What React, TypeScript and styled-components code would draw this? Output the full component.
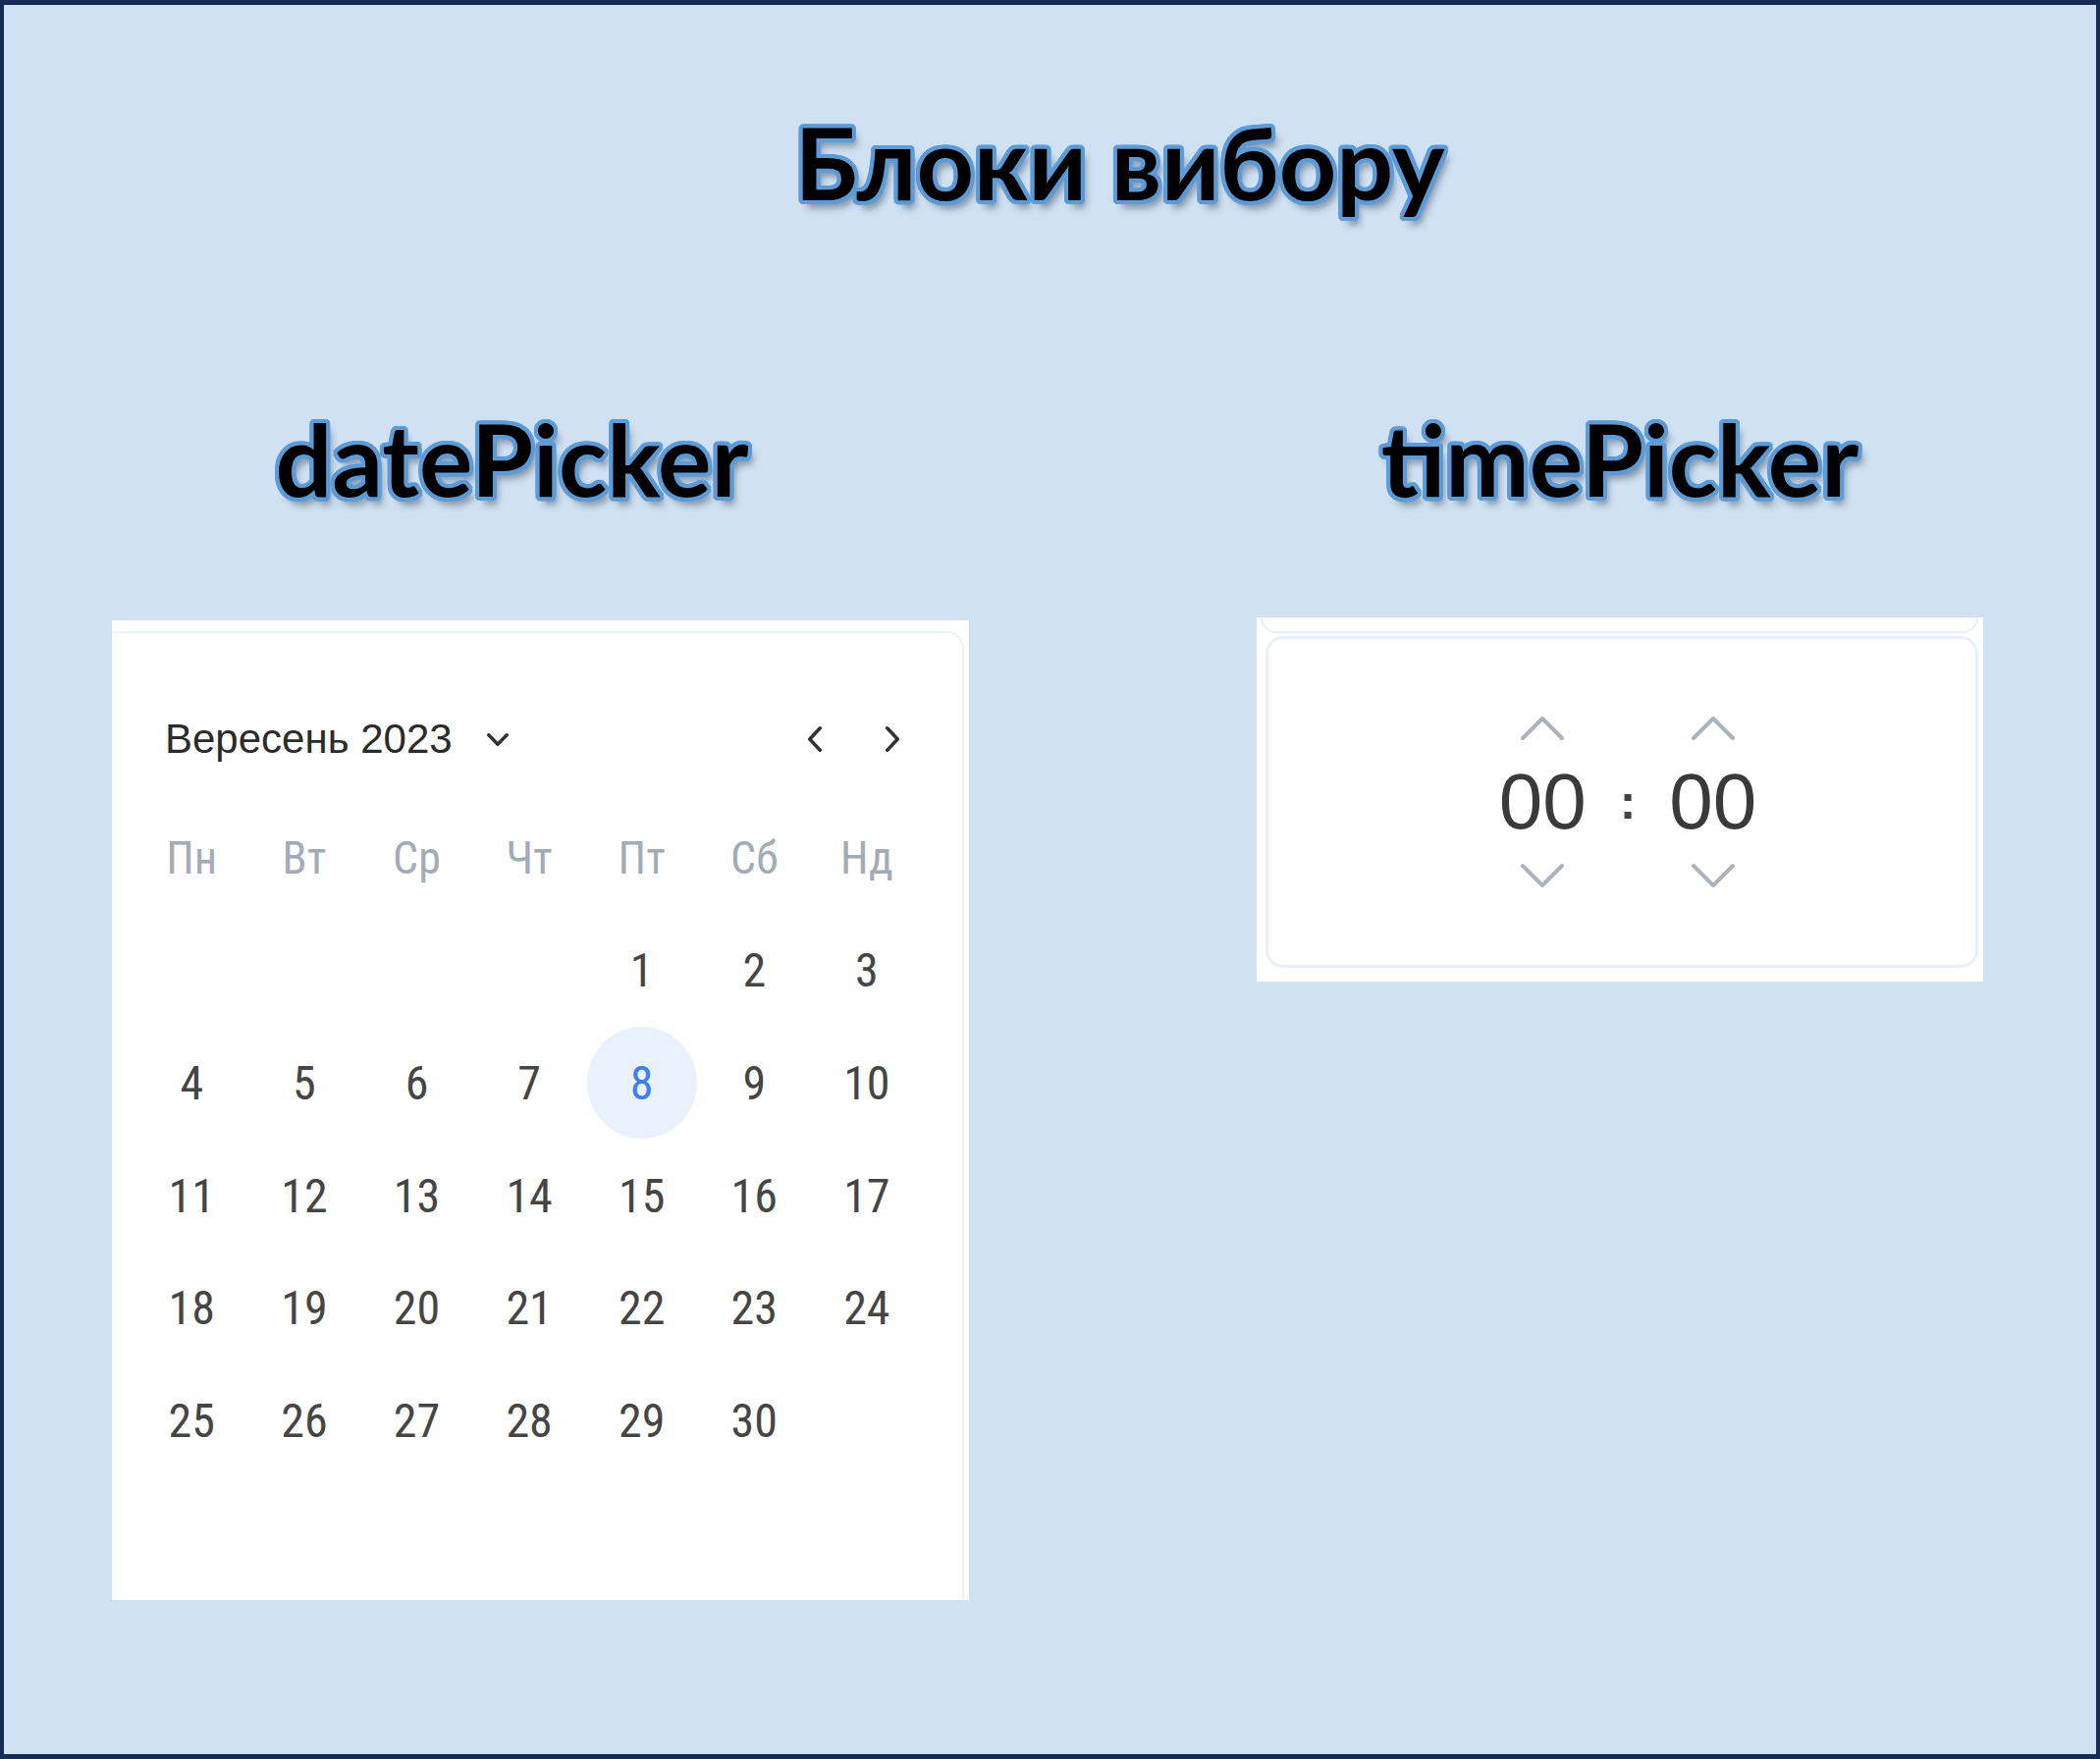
import React from "react";
import styled, { createGlobalStyle } from "styled-components";

const GlobalStyle = createGlobalStyle`
  html, body { margin: 0; padding: 0; }
  body { width: 2139px; height: 1792px; overflow: hidden; background: #cfe1f2; }
  * { box-sizing: border-box; }
`;

const Frame = styled.div`
  width: 2139px;
  height: 1792px;
  background: #cfe1f2;
  border: 5px solid #172c54;
  border-left-width: 4px;
  border-right-width: 4px;
  display: flex;
  flex-direction: column;
`;

const OUT = "#5d9bd6";

const Heading = styled.h1<{ $shift?: number }>`
  margin: 0;
  font-family: Lato, "Open Sans", "Noto Sans", sans-serif;
  font-weight: 700;
  font-size: 102px;
  line-height: 125px;
  color: #000;
  text-align: center;
  padding-left: ${(p) => (p.$shift && p.$shift > 0 ? p.$shift : 0)}px;
  padding-right: ${(p) => (p.$shift && p.$shift < 0 ? -p.$shift : 0)}px;
  text-shadow:
    -4px 0 0 ${OUT}, 4px 0 0 ${OUT}, 0 -4px 0 ${OUT}, 0 4px 0 ${OUT},
    -3px -3px 0 ${OUT}, 3px -3px 0 ${OUT}, -3px 3px 0 ${OUT}, 3px 3px 0 ${OUT},
    -4px -2px 0 ${OUT}, 4px -2px 0 ${OUT}, -4px 2px 0 ${OUT}, 4px 2px 0 ${OUT},
    -2px -4px 0 ${OUT}, 2px -4px 0 ${OUT}, -2px 4px 0 ${OUT}, 2px 4px 0 ${OUT},
    5px 8px 7px rgba(40, 55, 80, 0.45);
`;

const TitleRow = styled.div`
  margin-top: 97px;
`;

const Columns = styled.div`
  margin-top: 177px;
  padding-left: 110px;
  display: grid;
  grid-template-columns: 873px 740px;
  column-gap: 293px;
  align-items: start;
`;

const Section = styled.section`
  display: flex;
  flex-direction: column;
`;

/* ---------- Date picker ---------- */

const DateCard = styled.div`
  margin-top: 103px;
  height: 998px;
  background: #fff;
  padding: 11px 5px 0 0;
  display: flex;
`;

const DatePanel = styled.div`
  flex: 1;
  border-top: 2px solid #edf2fa;
  border-right: 2px solid #edf2fa;
  border-top-right-radius: 18px;
  display: flex;
  flex-direction: column;
`;

const CalHeader = styled.div`
  margin-top: 68px;
  height: 80px;
  padding: 0 51px 0 54px;
  display: flex;
  align-items: center;
  justify-content: space-between;
`;

const MonthButton = styled.div`
  display: flex;
  align-items: center;
  gap: 34px;
  font-family: "Liberation Sans", Arial, sans-serif;
  font-size: 42px;
  color: #2b2b2b;
`;

const NavGroup = styled.div`
  display: flex;
  align-items: center;
  gap: 39px;
`;

const NavButton = styled.div`
  width: 40px;
  height: 40px;
  display: flex;
  align-items: center;
  justify-content: center;
`;

const DayGrid = styled.div`
  margin: 24px 0 0 24px;
  display: grid;
  grid-template-columns: repeat(7, 114.6px);
  grid-auto-rows: 114.6px;
`;

const WeekDay = styled.div`
  display: flex;
  align-items: center;
  justify-content: center;
  font-family: "Liberation Sans Narrow", "Roboto Condensed", "DejaVu Sans Condensed", Roboto, sans-serif;
  font-size: 46px;
  color: #a3abb5;
`;

const Day = styled.div<{ $selected?: boolean }>`
  display: flex;
  align-items: center;
  justify-content: center;
  font-family: "Liberation Sans Narrow", "Roboto Condensed", "DejaVu Sans Condensed", Roboto, sans-serif;
  font-size: 48px;
  color: ${(p) => (p.$selected ? "#3d7ff0" : "#454545")};
  span {
    width: 112px;
    height: 114px;
    border-radius: 50%;
    display: flex;
    align-items: center;
    justify-content: center;
    background: ${(p) => (p.$selected ? "#e9f1fd" : "transparent")};
  }
`;

/* ---------- Time picker ---------- */

const TimeCard = styled.div`
  margin-top: 100px;
  height: 371px;
  background: #fff;
  display: flex;
  flex-direction: column;
`;

const PrevPanel = styled.div`
  margin: 0 5px 0 4px;
  height: 16px;
  border: 2px solid #e9f0fb;
  border-top: none;
  border-radius: 0 0 16px 16px;
`;

const TimePanel = styled.div`
  flex: 1;
  margin: 3px 5px 14px 9px;
  border: 3px solid #e9f0fb;
  border-radius: 18px;
  display: flex;
  align-items: center;
  justify-content: center;
  padding-left: 12px;
`;

const TimeRow = styled.div`
  display: flex;
  align-items: center;
  gap: 34px;
  font-family: "Liberation Sans", Arial, sans-serif;
  color: #3a3a3a;
`;

const Spinner = styled.div`
  display: flex;
  flex-direction: column;
  align-items: center;
  gap: 22px;
`;

const TimeValue = styled.div`
  font-size: 80px;
  line-height: 80px;
  height: 80px;
`;

const Colon = styled.div`
  font-size: 50px;
  line-height: 80px;
  font-weight: 700;
  color: #444;
`;

const Chevron = ({ dir, color, w, h, sw }: { dir: "up" | "down" | "left" | "right"; color: string; w: number; h: number; sw: number }) => {
  const p = sw / 2 + 1;
  let points = "";
  if (dir === "down") points = `${p},${p} ${w / 2},${h - p} ${w - p},${p}`;
  if (dir === "up") points = `${p},${h - p} ${w / 2},${p} ${w - p},${h - p}`;
  if (dir === "left") points = `${w - p},${p} ${p},${h / 2} ${w - p},${h - p}`;
  if (dir === "right") points = `${p},${p} ${w - p},${h / 2} ${p},${h - p}`;
  return (
    <svg width={w} height={h} viewBox={`0 0 ${w} ${h}`} fill="none">
      <polyline points={points} stroke={color} strokeWidth={sw} strokeLinecap="round" strokeLinejoin="round" />
    </svg>
  );
};

const weekDays = ["Пн", "Вт", "Ср", "Чт", "Пт", "Сб", "Нд"];

export default function App() {
  const cells: (number | null)[] = [null, null, null, null];
  for (let d = 1; d <= 30; d++) cells.push(d);

  return (
    <>
      <GlobalStyle />
      <Frame>
        <TitleRow>
          <Heading $shift={142}>Блоки вибору</Heading>
        </TitleRow>
        <Columns>
          <Section>
            <Heading as="h2" $shift={-58}>datePicker</Heading>
            <DateCard>
              <DatePanel>
                <CalHeader>
                  <MonthButton>
                    <span>Вересень 2023</span>
                    <Chevron dir="down" color="#333" w={24} h={15} sw={3.5} />
                  </MonthButton>
                  <NavGroup>
                    <NavButton>
                      <Chevron dir="left" color="#333" w={16} h={28} sw={3.5} />
                    </NavButton>
                    <NavButton>
                      <Chevron dir="right" color="#333" w={16} h={28} sw={3.5} />
                    </NavButton>
                  </NavGroup>
                </CalHeader>
                <DayGrid>
                  {weekDays.map((w) => (
                    <WeekDay key={w}>{w}</WeekDay>
                  ))}
                  {cells.map((d, i) => (
                    <Day key={i} $selected={d === 8}>
                      {d !== null && <span>{d}</span>}
                    </Day>
                  ))}
                </DayGrid>
              </DatePanel>
            </DateCard>
          </Section>
          <Section>
            <Heading as="h2">timePicker</Heading>
            <TimeCard>
              <PrevPanel />
              <TimePanel>
                <TimeRow>
                  <Spinner>
                    <Chevron dir="up" color="#aab2bb" w={46} h={26} sw={4} />
                    <TimeValue>00</TimeValue>
                    <Chevron dir="down" color="#aab2bb" w={46} h={26} sw={4} />
                  </Spinner>
                  <Colon>:</Colon>
                  <Spinner>
                    <Chevron dir="up" color="#aab2bb" w={46} h={26} sw={4} />
                    <TimeValue>00</TimeValue>
                    <Chevron dir="down" color="#aab2bb" w={46} h={26} sw={4} />
                  </Spinner>
                </TimeRow>
              </TimePanel>
            </TimeCard>
          </Section>
        </Columns>
      </Frame>
    </>
  );
}
